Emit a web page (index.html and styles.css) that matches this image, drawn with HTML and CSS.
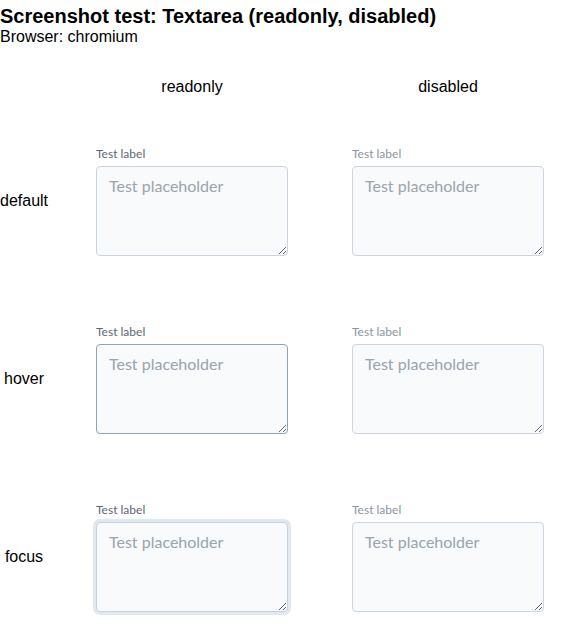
FILE: index.html
```html
<!DOCTYPE html>
<html>
<head>
<meta charset="utf-8">
<title>Screenshot test: Textarea (readonly, disabled)</title>
<link rel="stylesheet" href="styles.css">
</head>
<body>
<h1 class="title">Screenshot test: Textarea (readonly, disabled)</h1>
<p class="browser">Browser: chromium</p>
<div class="matrix">
  <div class="corner"></div>
  <div class="col-head">readonly</div>
  <div class="col-head">disabled</div>

  <div class="row-head">default</div>
  <div class="cell"><label class="field"><span class="field-label">Test label</span><textarea class="ta" readonly placeholder="Test placeholder"></textarea></label></div>
  <div class="cell"><label class="field is-disabled"><span class="field-label">Test label</span><textarea class="ta" disabled placeholder="Test placeholder"></textarea></label></div>

  <div class="row-head">hover</div>
  <div class="cell"><label class="field"><span class="field-label">Test label</span><textarea class="ta is-hover" readonly placeholder="Test placeholder"></textarea></label></div>
  <div class="cell"><label class="field is-disabled"><span class="field-label">Test label</span><textarea class="ta" disabled placeholder="Test placeholder"></textarea></label></div>

  <div class="row-head">focus</div>
  <div class="cell"><label class="field"><span class="field-label">Test label</span><textarea class="ta is-focus" readonly placeholder="Test placeholder"></textarea></label></div>
  <div class="cell"><label class="field is-disabled"><span class="field-label">Test label</span><textarea class="ta" disabled placeholder="Test placeholder"></textarea></label></div>
</div>
</body>
</html>
```
FILE: styles.css
```css
html, body {
  margin: 0;
  padding: 0;
  background: #ffffff;
  overflow: hidden;
}
body {
  font-family: "Liberation Sans", Arial, sans-serif;
  color: #000;
}
.title {
  margin: 0;
  padding-top: 4px;
  font-size: 20px;
  line-height: 24px;
  font-weight: bold;
}
.browser {
  margin: 0;
  font-size: 16px;
  line-height: 18px;
}
.matrix {
  display: grid;
  grid-template-columns: 64px 256px 1fr;
  grid-template-rows: 66px 178px 178px 178px;
}
.col-head {
  font-size: 16px;
  line-height: 18px;
  padding-top: 32px;
  text-align: center;
  width: 256px;
}
.row-head {
  font-size: 16px;
  line-height: 18px;
  width: 48px;
  text-align: center;
  align-self: center;
}
.cell {
  display: flex;
  align-items: center;
  padding-left: 32px;
}
.field {
  display: flex;
  flex-direction: column;
  width: 192px;
  font-family: Lato, "Noto Sans", sans-serif;
}
.field-label {
  font-size: 12px;
  line-height: 16px;
  color: #5d6875;
  margin-bottom: 4px;
}
.is-disabled .field-label {
  color: #8c96a1;
}
.ta {
  box-sizing: border-box;
  width: 192px;
  height: 90px;
  margin: 0;
  padding: 7px 12px 5px;
  font-family: Lato, "Noto Sans", sans-serif;
  font-size: 16px;
  line-height: 24px;
  color: #1f2933;
  background: #f8fafc;
  border: 1px solid #c9d3dd;
  border-radius: 4px;
  outline: none;
}
.ta::placeholder {
  color: #9aa4ae;
  opacity: 1;
}
.ta:disabled {
  background: #f8fafc;
  border-color: #cdd6df;
}
.ta.is-hover {
  border-color: #8fa4b6;
}
.ta.is-focus {
  border-color: #c6d2dd;
  box-shadow: 0 0 0 3px #e1e9f0;
}
```
